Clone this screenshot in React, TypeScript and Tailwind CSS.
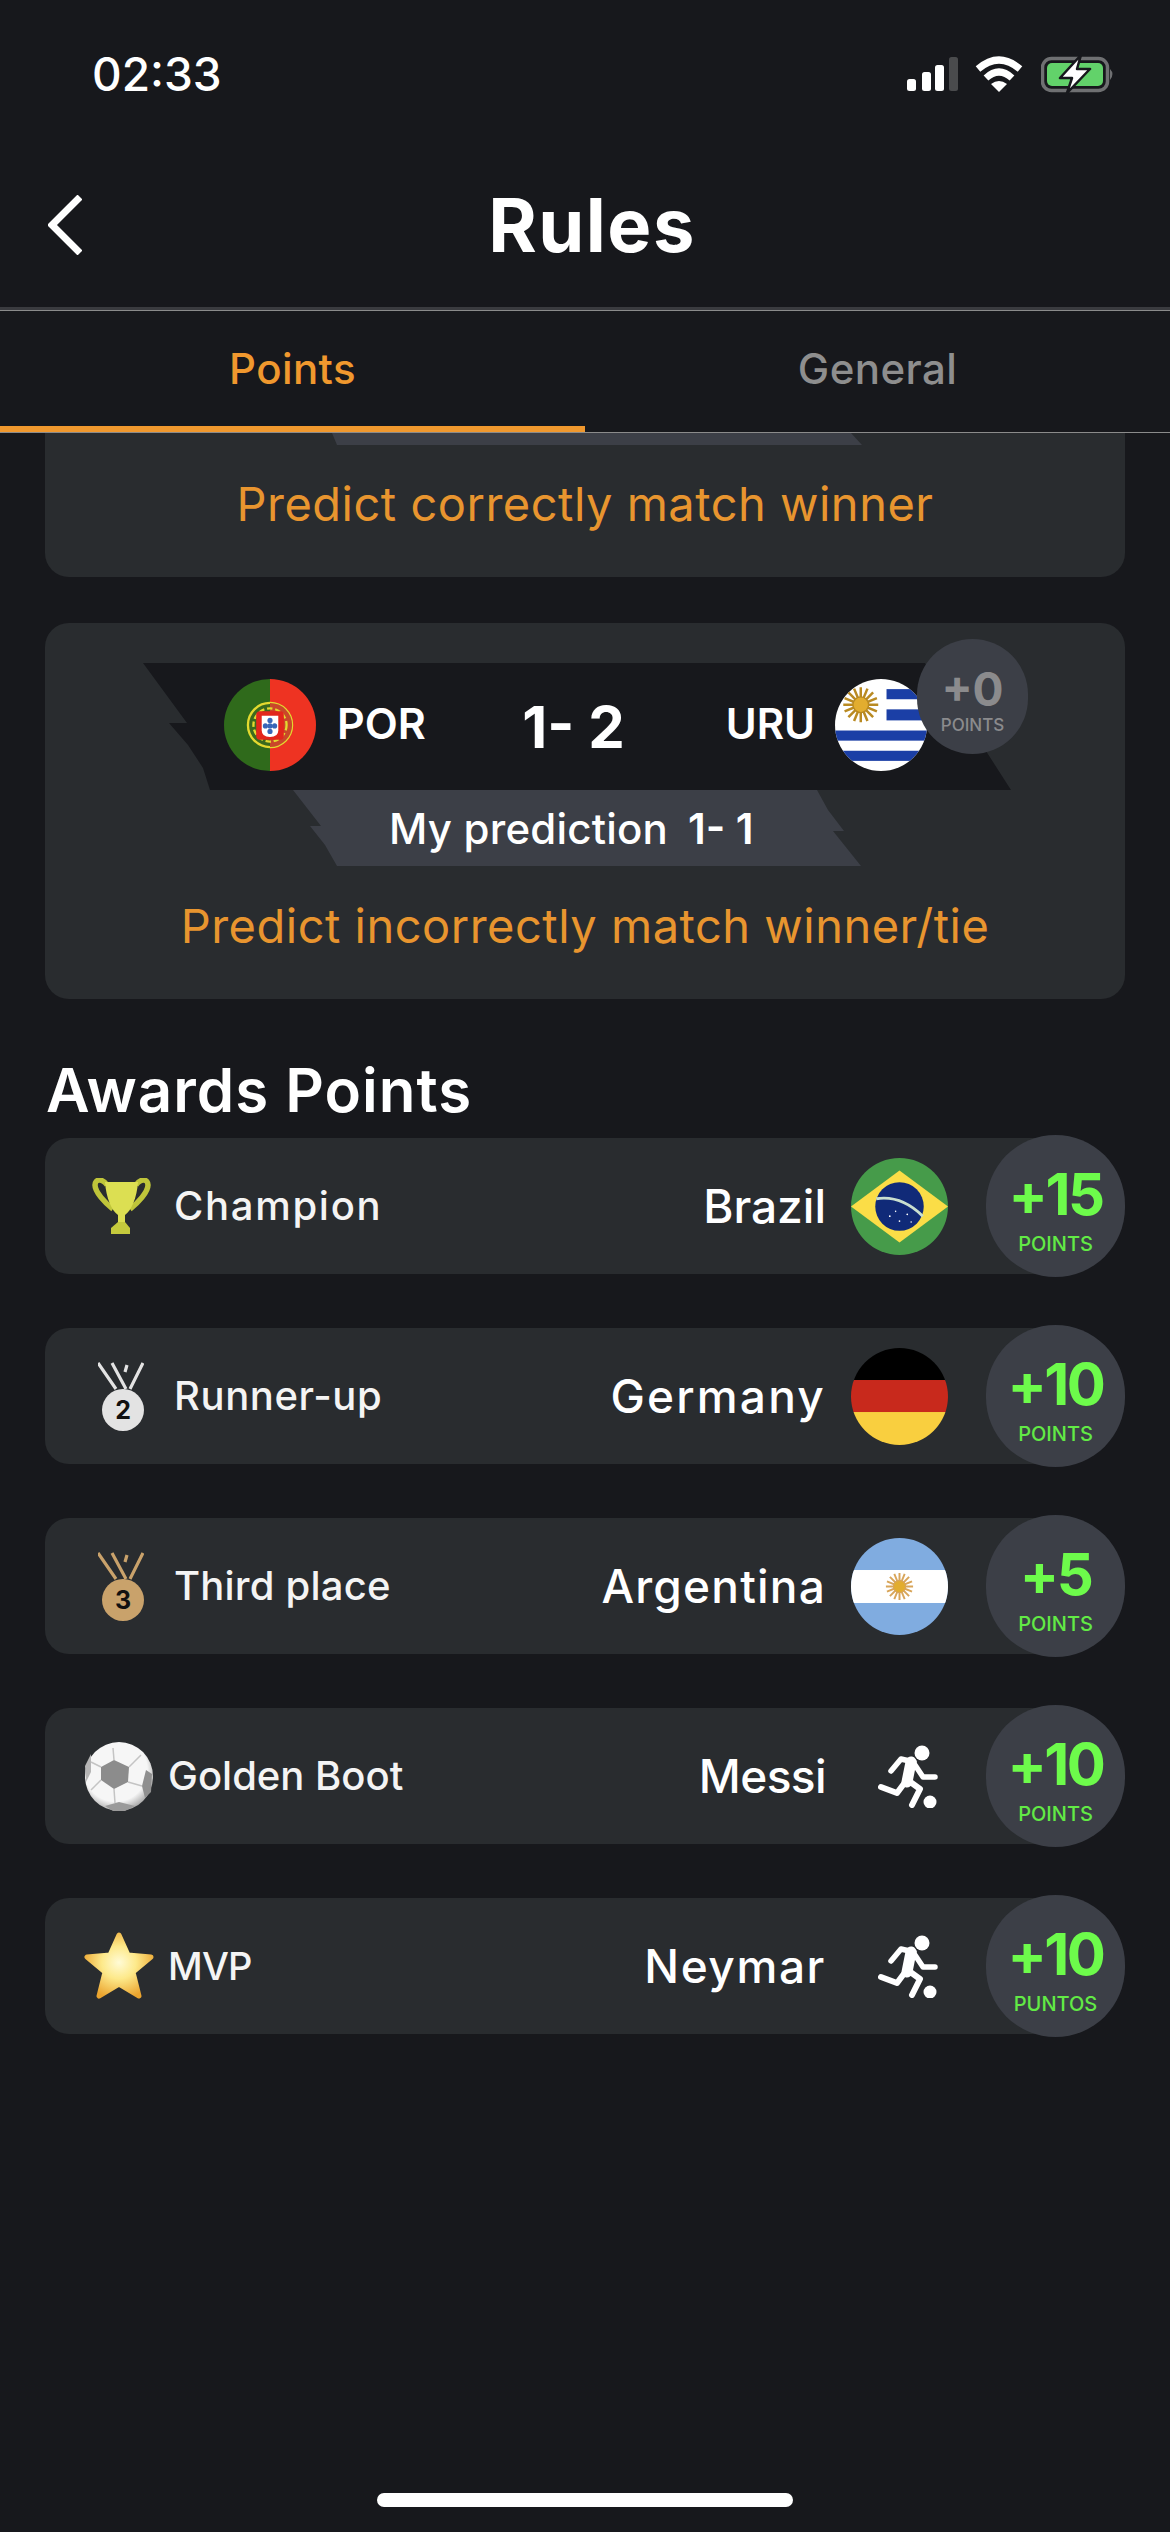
import type { ReactNode } from 'react';

const rayAngles = Array.from({ length: 16 }, (_, i) => (i * Math.PI) / 8);

function Sun({ cx, cy, r, color }: { cx: number; cy: number; r: number; color: string }) {
  return (
    <g>
      {rayAngles.map((a, i) => (
        <line
          key={i}
          x1={cx}
          y1={cy}
          x2={cx + Math.cos(a) * r}
          y2={cy + Math.sin(a) * r}
          stroke={color}
          strokeWidth={r / 7}
        />
      ))}
      <circle cx={cx} cy={cy} r={r * 0.45} fill="#e2ad2f" stroke={color} strokeWidth={r / 12} />
    </g>
  );
}

function FlagPortugal() {
  return (
    <svg viewBox="0 0 100 100" className="w-full h-full rounded-full">
      <rect width="50" height="100" fill="#2f6a1b" />
      <rect x="50" width="50" height="100" fill="#ee3322" />
      <circle cx="50" cy="50" r="24" fill="#3a6a1e" stroke="#e3d92f" strokeWidth="2.5" />
      <path d="M50 26 A24 24 0 0 1 50 74 Z" fill="#c9472a" />
      <circle cx="50" cy="50" r="18" fill="none" stroke="#e3d92f" strokeWidth="2.5" strokeDasharray="6 3" />
      <rect x="35" y="35" width="30" height="31" rx="4" fill="#e2261c" />
      <path d="M41 40 H59 V56 Q59 63 50 63 Q41 63 41 56 Z" fill="#ffffff" />
      <circle cx="50" cy="45" r="2.8" fill="#3866b8" />
      <circle cx="45" cy="51" r="2.8" fill="#3866b8" />
      <circle cx="50" cy="51" r="2.8" fill="#3866b8" />
      <circle cx="55" cy="51" r="2.8" fill="#3866b8" />
      <circle cx="50" cy="57" r="2.8" fill="#3866b8" />
    </svg>
  );
}

function FlagUruguay() {
  return (
    <svg viewBox="0 0 100 100" className="w-full h-full rounded-full">
      <rect width="100" height="100" fill="#ffffff" />
      <rect x="56" y="11" width="44" height="11" fill="#1b3fa6" />
      <rect x="56" y="33" width="44" height="12" fill="#1b3fa6" />
      <rect y="56" width="100" height="11" fill="#1b3fa6" />
      <rect y="78" width="100" height="11" fill="#1b3fa6" />
      <Sun cx={28} cy={28} r={19} color="#b98a22" />
    </svg>
  );
}

function FlagBrazil() {
  return (
    <svg viewBox="0 0 100 100" className="w-full h-full rounded-full">
      <rect width="100" height="100" fill="#469b4a" />
      <polygon points="0,50 50,13 100,50 50,87" fill="#fbdd47" />
      <circle cx="50" cy="50" r="25" fill="#102a78" />
      <path d="M26 42 Q52 38 74 60" fill="none" stroke="#c9dfcf" strokeWidth="3" />
      <circle cx="40" cy="60" r="0.9" fill="#ffffff" />
      <circle cx="50" cy="65" r="0.9" fill="#ffffff" />
      <circle cx="58" cy="58" r="0.9" fill="#ffffff" />
      <circle cx="46" cy="55" r="0.8" fill="#ffffff" />
      <circle cx="62" cy="66" r="0.8" fill="#ffffff" />
    </svg>
  );
}

function FlagGermany() {
  return (
    <svg viewBox="0 0 100 100" className="w-full h-full rounded-full">
      <rect width="100" height="33" fill="#000000" />
      <rect y="33" width="100" height="33" fill="#c8291c" />
      <rect y="66" width="100" height="34" fill="#f9cf3f" />
    </svg>
  );
}

function FlagArgentina() {
  return (
    <svg viewBox="0 0 100 100" className="w-full h-full rounded-full">
      <rect width="100" height="100" fill="#80ace0" />
      <rect y="33" width="100" height="34" fill="#ffffff" />
      <Sun cx={50} cy={50} r={14} color="#d8a55a" />
    </svg>
  );
}

function Runner() {
  return (
    <svg viewBox="0 0 60 63" className="ml-[17px] w-[60px] h-[63px]" fill="none" stroke="#ffffff" strokeLinecap="round" strokeLinejoin="round">
      <circle cx="44" cy="8" r="7.5" fill="#ffffff" stroke="none" />
      <circle cx="52" cy="57" r="6.5" fill="#ffffff" stroke="none" />
      <path d="M13 26 L23 14 L36 17" strokeWidth="5.5" />
      <path d="M37 20 L45 32 L57 32" strokeWidth="5.5" />
      <path d="M33 17 L29 37" strokeWidth="11" />
      <path d="M28 36 L19 48 L3 42" strokeWidth="6" />
      <path d="M31 36 L42 44 L34 60" strokeWidth="6" />
    </svg>
  );
}

function Trophy() {
  return (
    <svg viewBox="0 0 59 56" className="w-[59px] h-[56px]" fill="none">
      <path d="M15 7 C10 0 3 1 3 7 C3 14 13 25 21 31" stroke="#bfc53a" strokeWidth="5.5" />
      <path d="M44 7 C49 0 56 1 56 7 C56 14 46 25 38 31" stroke="#bfc53a" strokeWidth="5.5" />
      <path d="M13 4 H46 C45 20 39 33 33 37 V45 H26 V37 C20 33 14 20 13 4 Z" fill="#dcdf52" />
      <path d="M26 44 H33 L38 50 V56 H19 V50 Z" fill="#c5ca3d" />
    </svg>
  );
}

function Medal({ color, num }: { color: string; num: string }) {
  return (
    <svg viewBox="0 0 46 69" className="w-[46px] h-[69px]" fill="none">
      <path d="M0 1 L18 27 M14 1 L28 27 M29 3 L27 10 M45 1 L32 27" stroke={color} strokeWidth="3.2" />
      <circle cx="25" cy="48" r="21" fill={color} />
      <text x="25" y="57" textAnchor="middle" fontSize="25" fontWeight="700" fill="#111111" fontFamily="Inter, sans-serif">
        {num}
      </text>
    </svg>
  );
}

function Ball() {
  return (
    <svg viewBox="0 0 68 69" className="w-[68px] h-[69px]">
      <defs>
        <radialGradient id="ballShade" cx="45%" cy="40%" r="62%">
          <stop offset="75%" stopColor="#f6f6f6" />
          <stop offset="100%" stopColor="#a5a5a5" />
        </radialGradient>
      </defs>
      <ellipse cx="34" cy="34.5" rx="34" ry="34.5" fill="url(#ballShade)" />
      <polygon points="29,18 44,25 43,40 29,47 16,38 16,25" fill="#8c8c8c" />
      <polygon points="61,28 67,32 66,50 60,56 57,44" fill="#8f8f8f" />
      <polygon points="20,64 34,60 50,64 40,69 28,69" fill="#9a9a9a" />
      <polygon points="0,24 6,12 6,30 1,40" fill="#b5b5b5" />
      <path d="M29 18 L28 6 M44 25 L56 13 M43 40 L57 44 M29 47 L30 61 M16 38 L6 48 M16 25 L6 20" stroke="#c4c4c4" strokeWidth="1.5" fill="none" />
    </svg>
  );
}

function Star() {
  return (
    <svg viewBox="0 0 72 68" className="w-[72px] h-[68px]">
      <defs>
        <radialGradient id="starShade" cx="50%" cy="45%" r="60%">
          <stop offset="0%" stopColor="#fffbd6" />
          <stop offset="45%" stopColor="#fde98a" />
          <stop offset="100%" stopColor="#eba42e" />
        </radialGradient>
      </defs>
      <polygon
        points="36,3 45,23 68,25 50,40 56,64 36,52 16,64 22,40 4,25 27,23"
        fill="url(#starShade)"
        stroke="url(#starShade)"
        strokeWidth="5"
        strokeLinejoin="round"
      />
    </svg>
  );
}

function StatusIcons() {
  return (
    <div className="flex items-center">
      <svg viewBox="0 0 51 34" className="w-[51px] h-[34px]">
        <rect y="22" width="9" height="12" rx="2.5" fill="#ffffff" />
        <rect x="15" y="15" width="9" height="19" rx="2.5" fill="#ffffff" />
        <rect x="28" y="8" width="9" height="26" rx="2.5" fill="#ffffff" />
        <rect x="42" width="9" height="34" rx="2.5" fill="#4a4b4d" />
      </svg>
      <svg viewBox="0 0 48 36" className="ml-[17px] w-[48px] h-[36px]" fill="none" stroke="#ffffff" strokeWidth="7">
        <path d="M3 13 Q24 -5 45 13" />
        <path d="M11 22 Q24 10 37 22" />
        <path d="M16 28 L24 36 L32 28 Q24 22 16 28 Z" fill="#ffffff" stroke="none" />
      </svg>
      <svg viewBox="0 0 74 38" className="ml-[18px] w-[74px] h-[38px]">
        <rect x="1.5" y="3.5" width="65" height="32" rx="9" fill="none" stroke="#6f7072" strokeWidth="3.5" />
        <rect x="6" y="8" width="56" height="23" rx="5" fill="#62d26a" />
        <path d="M69 14 Q74 19 69 25 Z" fill="#6f7072" />
        <path d="M40 0 L19 23 H31 L26 38 L49 14 H36 Z" fill="#ffffff" stroke="#17181c" strokeWidth="2.5" strokeLinejoin="round" />
      </svg>
    </div>
  );
}

type Award = {
  label: string;
  labelClass: string;
  value: string;
  points: string;
  pick: string;
  pickClass: string;
  icon: ReactNode;
  iconClass: string;
  end: ReactNode;
};

const awards: Award[] = [
  {
    label: 'Champion',
    labelClass: 'text-[40px] tracking-[1.7px]',
    value: '+15',
    points: 'POINTS',
    pick: 'Brazil',
    pickClass: 'tracking-[0px]',
    icon: <Trophy />,
    iconClass: 'ml-[47px] mr-[23px]',
    end: <FlagBrazil />,
  },
  {
    label: 'Runner-up',
    labelClass: 'text-[40px] tracking-[0.6px]',
    value: '+10',
    points: 'POINTS',
    pick: 'Germany',
    pickClass: 'tracking-[2.2px]',
    icon: <Medal color="#e3e3e3" num="2" />,
    iconClass: 'ml-[53px] mr-[30px]',
    end: <FlagGermany />,
  },
  {
    label: 'Third place',
    labelClass: 'text-[40px] tracking-[0.2px]',
    value: '+5',
    points: 'POINTS',
    pick: 'Argentina',
    pickClass: 'tracking-[1.2px]',
    icon: <Medal color="#c9a26b" num="3" />,
    iconClass: 'ml-[53px] mr-[30px]',
    end: <FlagArgentina />,
  },
  {
    label: 'Golden Boot',
    labelClass: 'text-[40px]',
    value: '+10',
    points: 'POINTS',
    pick: 'Messi',
    pickClass: 'tracking-[-0.6px]',
    icon: <Ball />,
    iconClass: 'ml-[40px] mr-[15px]',
    end: <Runner />,
  },
  {
    label: 'MVP',
    labelClass: 'text-[38px] tracking-[-0.8px]',
    value: '+10',
    points: 'PUNTOS',
    pick: 'Neymar',
    pickClass: 'tracking-[1.6px]',
    icon: <Star />,
    iconClass: 'ml-[38px] mr-[13px]',
    end: <Runner />,
  },
];

function AwardRow({ award }: { award: Award }) {
  return (
    <div className="flex items-center h-[136px]">
      <div className="flex-1 -mr-[70px] h-[136px] flex items-center rounded-l-[24px] bg-[#292c2f] pr-[108px]">
        <div className={`shrink-0 ${award.iconClass}`}>{award.icon}</div>
        <span className={`font-medium text-[#f4f4f4] ${award.labelClass}`}>{award.label}</span>
        <span className={`ml-auto text-[46px] font-medium text-white ${award.pickClass}`}>{award.pick}</span>
        <div className="ml-[25px] w-[97px] h-[97px] flex items-center justify-center">{award.end}</div>
      </div>
      <div className="relative shrink-0 w-[139px] h-[142px] rounded-full bg-[#3c3f47] flex flex-col items-center">
        <span className="mt-[30px] text-[58px] leading-[58px] font-bold text-[#6dfb4b] tracking-[-2.5px]">{award.value}</span>
        <span className="mt-[9px] text-[20px] leading-[24px] font-medium text-[#62ea45]">{award.points}</span>
      </div>
    </div>
  );
}

export default function App() {
  return (
    <div className="w-[1170px] h-[2532px] flex flex-col bg-[#17181c] overflow-hidden font-['Inter',sans-serif] text-white">
      <div className="h-[148px] flex items-center justify-between pl-[92px] pr-[55px]">
        <span className="text-[46px] font-medium">02:33</span>
        <StatusIcons />
      </div>

      <div className="relative h-[159px] pb-[5px] flex items-center justify-center">
        <svg viewBox="0 0 34 60" className="absolute left-[48px] top-[47px] w-[34px] h-[60px]" fill="none" stroke="#ffffff" strokeWidth="7">
          <path d="M32 2 L4 30 L32 58" />
        </svg>
        <h1 className="ml-[14px] text-[74px] font-bold tracking-[1.5px]">Rules</h1>
      </div>
      <div className="h-[3px] bg-[#3a3b3f]" />
      <div className="h-[1px] bg-[#8b8b8b]" />

      <div className="flex h-[122px] border-b border-[#8b8b8b]">
        <div className="w-[585px] h-[121px] flex items-center justify-center border-b-[6px] border-[#f0982e]">
          <span className="text-[42px] font-medium tracking-[0.4px] text-[#f0982e]">Points</span>
        </div>
        <div className="flex-1 h-[115px] flex items-center justify-center">
          <span className="text-[42px] font-medium tracking-[0.4px] text-[#8e8e8e]">General</span>
        </div>
      </div>

      <main className="flex-1 px-[45px]">
        <section className="h-[144px] rounded-b-[24px] bg-[#292c2f]">
          <div className="ml-[287px] w-[530px] h-[12px] bg-[#3c3f47] [clip-path:polygon(0_0,519px_0,530px_12px,5px_12px)]" />
          <p className="mt-[29px] text-center text-[47px] leading-[60px] tracking-[0.5px] text-[#e8952f]">Predict correctly match winner</p>
        </section>

        <section className="relative mt-[46px] h-[376px] rounded-[24px] bg-[#292c2f] pt-[40px]">
          <div className="ml-[98px] w-[868px] h-[127px] flex items-center pb-[3px] pl-[81px] pr-[84px] bg-[#17181c] [clip-path:polygon(0_0,782px_0,800px_30px,810px_60px,825px_60px,868px_127px,67px_127px,60px_105px,45px_82px,26px_60px,44px_60px)]">
            <div className="shrink-0 w-[92px] h-[92px]"><FlagPortugal /></div>
            <span className="ml-[21px] mb-[3px] w-[185px] text-[43px] font-semibold">POR</span>
            <span className="w-[103px] mt-[5px] text-center text-[58px] font-bold whitespace-nowrap">1- 2</span>
            <div className="flex-1 flex items-center justify-end">
              <span className="mr-[20px] mb-[3px] text-[42px] font-semibold">URU</span>
              <div className="shrink-0 w-[92px] h-[92px]"><FlagUruguay /></div>
            </div>
          </div>
          <div className="ml-[248px] w-[568px] h-[76px] flex items-center pl-[96px] bg-[#3c3f47] [clip-path:polygon(0_0,524px_0,535px_20px,551px_41px,540px_41px,568px_76px,44px_76px,32px_55px,17px_36px,28px_36px)]">
            <span className="text-[42px] font-medium tracking-[0.2px]">My prediction</span>
            <span className="ml-[20px] text-[42px] font-semibold">1- 1</span>
          </div>
          <p className="mt-[30px] text-center text-[47px] leading-[60px] tracking-[0.5px] text-[#e8952f]">Predict incorrectly match winner/tie</p>
          <div className="absolute left-[872px] top-[16px] w-[111px] h-[115px] rounded-full bg-[#3c3f47] flex flex-col items-center text-[#8b8b8d]">
            <span className="mt-[27px] text-[46px] leading-[46px] font-bold">+0</span>
            <span className="mt-[3px] text-[17px] leading-[20px] font-medium">POINTS</span>
          </div>
        </section>

        <h2 className="h-[139px] pt-[42px] pl-[1px] flex items-center text-[60px] font-semibold tracking-[1px]">Awards Points</h2>

        <div className="flex flex-col gap-[54px]">
          {awards.map((award) => (
            <AwardRow key={award.label} award={award} />
          ))}
        </div>
      </main>

      <div className="pb-[25px] flex justify-center">
        <div className="w-[416px] h-[14px] rounded-full bg-white" />
      </div>
    </div>
  );
}
